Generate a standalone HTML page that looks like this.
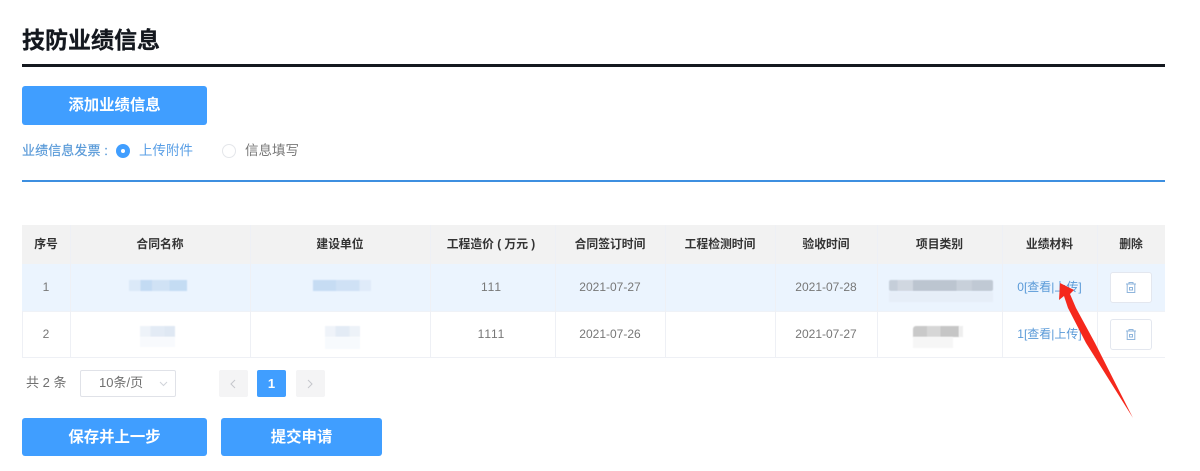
<!DOCTYPE html>
<html lang="zh">
<head>
<meta charset="utf-8">
<title>技防业绩信息</title>
<style>
html,body{margin:0;padding:0;background:#fff}
body{width:1200px;height:471px;position:relative;overflow:hidden;font-family:"Liberation Sans","Noto Sans CJK SC",sans-serif;font-size:12px;color:#606266;font-kerning:none}
.a{position:absolute}
.t{position:absolute;white-space:nowrap;line-height:16px;text-align:center}
.btn{position:absolute;background:#409eff;border-radius:3px;color:#fff;font-weight:700;font-size:15.4px;text-align:center;height:38px;line-height:39px}
.h{position:absolute;top:225px;height:39px;line-height:38px;text-align:center;font-size:11.8px;font-weight:700;color:#333;white-space:nowrap}
.c{position:absolute;height:47px;line-height:46px;text-align:center;font-size:12px;color:#777;white-space:nowrap}
.v{position:absolute;width:1px;background:#eef0f5}
.del{position:absolute;left:1110px;width:40px;height:29px;background:#fff;border:1px solid #e3e7ef;border-radius:3px}
.del svg{position:absolute;left:14px;top:8px}
.blob{position:absolute;filter:blur(.6px)}
</style>
</head>
<body>
<div class="t" style="left:22px;top:26px;font-size:23px;font-weight:700;color:#14181f;line-height:28px;-webkit-text-stroke:.3px #14181f">技防业绩信息</div>
<div class="a" style="left:22px;top:64px;width:1143px;height:3px;background:#14181f"></div>

<div class="btn" style="left:22px;top:86px;width:185px;height:39px;line-height:39px">添加业绩信息</div>

<div class="t" style="left:22px;top:143px;font-size:13px;color:#5a9ad8;font-weight:400;-webkit-text-stroke:.2px #5a9ad8;letter-spacing:.1px">业绩信息发票 :</div>
<div class="a" style="left:116px;top:144px;width:14px;height:14px;border-radius:50%;background:#409eff"></div>
<div class="a" style="left:121px;top:149px;width:4px;height:4px;border-radius:50%;background:#fff"></div>
<div class="t" style="left:139px;top:143px;font-size:13.500px;color:#5a9fe6">上传附件</div>
<div class="a" style="left:222px;top:144px;width:12px;height:12px;border-radius:50%;border:1px solid #e4e6ea;background:#fff"></div>
<div class="t" style="left:245px;top:143px;font-size:13.500px;color:#777">信息填写</div>
<div class="a" style="left:22px;top:180px;width:1143px;height:2px;background:#3d8fe0"></div>

<!-- table -->
<div class="a" style="left:22px;top:225px;width:1143px;height:39px;background:#f2f2f2"></div>
<div class="a" style="left:22px;top:264px;width:1143px;height:47px;background:#ebf4fe"></div>
<div class="a" style="left:22px;top:311px;width:1143px;height:47px;background:#fff"></div>
<div class="a" style="left:22px;top:357px;width:1143px;height:1px;background:#eef0f5"></div>
<div class="a" style="left:22px;top:311px;width:1143px;height:1px;background:#eff2f7"></div>
<div class="v" style="left:22px;top:311px;height:47px"></div>
<div class="v" style="left:70px;top:225px;height:133px"></div>
<div class="v" style="left:250px;top:225px;height:133px"></div>
<div class="v" style="left:430px;top:225px;height:133px"></div>
<div class="v" style="left:555px;top:225px;height:133px"></div>
<div class="v" style="left:665px;top:225px;height:133px"></div>
<div class="v" style="left:775px;top:225px;height:133px"></div>
<div class="v" style="left:877px;top:225px;height:133px"></div>
<div class="v" style="left:1002px;top:225px;height:133px"></div>
<div class="v" style="left:1097px;top:225px;height:133px"></div>

<div class="h" style="left:22px;width:48px">序号</div>
<div class="h" style="left:70px;width:180px">合同名称</div>
<div class="h" style="left:250px;width:180px">建设单位</div>
<div class="h" style="left:430px;width:122px">工程造价 ( 万元 )</div>
<div class="h" style="left:555px;width:110px">合同签订时间</div>
<div class="h" style="left:665px;width:110px">工程检测时间</div>
<div class="h" style="left:775px;width:102px">验收时间</div>
<div class="h" style="left:877px;width:125px">项目类别</div>
<div class="h" style="left:1002px;width:95px">业绩材料</div>
<div class="h" style="left:1097px;width:68px">删除</div>

<div class="c" style="left:22px;width:48px;top:264px">1</div>
<div class="c" style="left:430px;width:122px;top:264px">111</div>
<div class="c" style="left:555px;width:110px;top:264px">2021-07-27</div>
<div class="c" style="left:775px;width:102px;top:264px">2021-07-28</div>
<div class="c" style="left:1002px;width:95px;top:264px;color:#5a9ad8">0[查看|上传]</div>

<div class="c" style="left:22px;width:48px;top:311px">2</div>
<div class="c" style="left:430px;width:122px;top:311px">1111</div>
<div class="c" style="left:555px;width:110px;top:311px">2021-07-26</div>
<div class="c" style="left:775px;width:102px;top:311px">2021-07-27</div>
<div class="c" style="left:1002px;width:95px;top:311px;color:#5a9ad8">1[查看|上传]</div>

<!-- mosaics -->
<div class="blob" style="left:129px;top:280px;width:58px;height:11px;background:linear-gradient(90deg,#dbe9f8 0 20%,#c3dbf3 20% 40%,#d0e2f5 40% 70%,#c4dcf3 70%)"></div>
<div class="blob" style="left:313px;top:280px;width:58px;height:11px;background:linear-gradient(90deg,#c6dcf3 0 40%,#cfe1f5 40% 80%,#dfebf9 80%)"></div>
<div class="blob" style="left:140px;top:326px;width:35px;height:11px;background:linear-gradient(90deg,#eef3f9 0 30%,#e3ebf5 30% 70%,#dfe8f3 70%)"></div>
<div class="blob" style="left:140px;top:337px;width:35px;height:10px;background:#f8fafd"></div>
<div class="blob" style="left:325px;top:326px;width:35px;height:11px;background:linear-gradient(90deg,#eff3f9 0 30%,#e3ebf5 30% 70%,#edf2f8 70%)"></div>
<div class="blob" style="left:325px;top:337px;width:35px;height:12px;background:#f7fafd"></div>
<div class="blob" style="left:889px;top:280px;width:104px;height:11px;border-radius:2px;background:linear-gradient(90deg,#c5ced9 0 8%,#d0d7e0 8% 23%,#bcc5d0 23% 65%,#c8d0da 65% 80%,#c0c9d4 80%)"></div>
<div class="blob" style="left:889px;top:292px;width:104px;height:10px;background:#e6eef8"></div>
<div class="blob" style="left:913px;top:326px;width:46px;height:11px;border-radius:3px 0 0 0;background:linear-gradient(90deg,#c9c9c9 0 30%,#d6d6d6 30% 60%,#c6c6c6 60%)"></div>
<div class="blob" style="left:959px;top:326px;width:4px;height:11px;background:#eeeeee"></div>
<div class="blob" style="left:913px;top:337px;width:40px;height:11px;background:#f6f6f6"></div>

<!-- delete buttons -->
<div class="del" style="top:272px">
<svg width="12" height="13" viewBox="0 0 12 13" fill="none" stroke="#8fb5dc" stroke-width="1"><path d="M1 3h10M4 3V1.500h4V3M2.200 3v8.500h7.600V3M4.500 6.500h3v2.500h-3z"/></svg>
</div>
<div class="del" style="top:319px">
<svg width="12" height="13" viewBox="0 0 12 13" fill="none" stroke="#8fb5dc" stroke-width="1"><path d="M1 3h10M4 3V1.500h4V3M2.200 3v8.500h7.600V3M4.500 6.500h3v2.500h-3z"/></svg>
</div>

<!-- pagination -->
<div class="t" style="left:26px;top:375px;font-size:13px;color:#707070">共 2 条</div>
<div class="a" style="left:80px;top:370px;width:94px;height:25px;border:1px solid #e0e2e8;border-radius:2px"></div>
<div class="t" style="left:99px;top:375px;font-size:13px;color:#707070">10条/页</div>
<svg class="a" style="left:159px;top:381px" width="9" height="6" viewBox="0 0 9 6" fill="none" stroke="#d0d3d9"><path d="M1 1l3.500 3.500L8 1"/></svg>
<div class="a" style="left:219px;top:370px;width:29px;height:27px;background:#f4f4f5;border-radius:2px"></div>
<svg class="a" style="left:229px;top:379px" width="8" height="10" viewBox="0 0 8 10" fill="none" stroke="#c4c7cc"><path d="M6 1L2 5l4 4"/></svg>
<div class="a" style="left:257px;top:370px;width:29px;height:27px;line-height:27px;background:#409eff;border-radius:2px;color:#fff;font-weight:700;font-size:13px;text-align:center">1</div>
<div class="a" style="left:296px;top:370px;width:29px;height:27px;background:#f4f4f5;border-radius:2px"></div>
<svg class="a" style="left:306px;top:379px" width="8" height="10" viewBox="0 0 8 10" fill="none" stroke="#c4c7cc"><path d="M2 1l4 4-4 4"/></svg>

<div class="btn" style="left:22px;top:418px;width:185px">保存并上一步</div>
<div class="btn" style="left:221px;top:418px;width:161px">提交申请</div>

<!-- arrow -->
<svg class="a" style="left:0;top:0" width="1200" height="471" viewBox="0 0 1200 471"><path d="M1060 283L1074 290L1070 294L1076 308L1095 343L1133 418L1086 343L1068 308L1064 296L1059 300Z" fill="#f5281c"/></svg>
</body>
</html>
